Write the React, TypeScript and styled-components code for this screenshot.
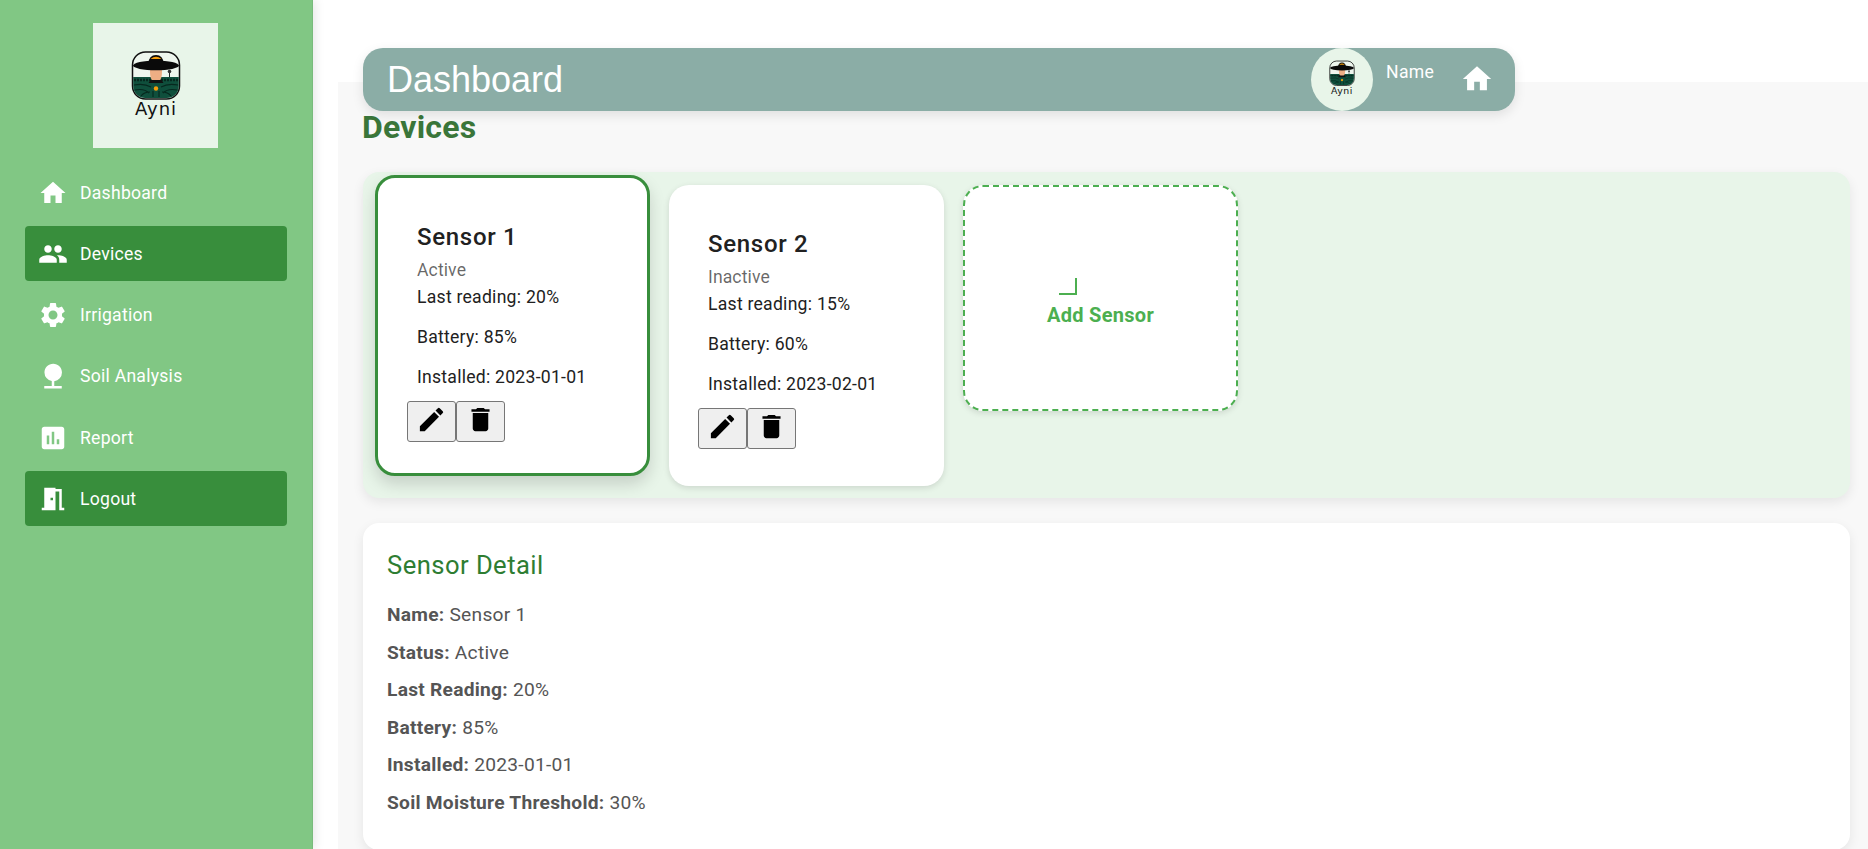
import React from "react";
import styled, { createGlobalStyle } from "styled-components";
import {
  MdAssessment,
  MdDelete,
  MdEdit,
  MdHome,
  MdMeetingRoom,
  MdNature,
  MdPeople,
  MdSettings,
} from "react-icons/md";

const GlobalStyle = createGlobalStyle`
  html, body {
    margin: 0;
    padding: 0;
    height: 100%;
    background: #fff;
    font-family: Roboto, "Liberation Sans", sans-serif;
  }
  * { box-sizing: border-box; }
`;

const Page = styled.div`
  display: flex;
  height: 849px;
  overflow: hidden;
`;

const Sidebar = styled.aside`
  width: 313px;
  flex-shrink: 0;
  background: #81c784;
  border-right: 1px solid #79bb7c;
  box-shadow: 2px 0 10px rgba(0, 0, 0, 0.1);
  padding: 23px 25px 0 25px;
  display: flex;
  flex-direction: column;
  position: relative;
  z-index: 2;
`;

const LogoBox = styled.div`
  width: 125px;
  height: 125px;
  margin: 0 0 17px 68px;
  padding-top: 4px;
  background: #e8f5e9;
  display: flex;
  align-items: center;
  justify-content: center;
`;

const NavList = styled.nav`
  display: flex;
  flex-direction: column;
  gap: 6.25px;
`;

const NavItem = styled.a<{ $active?: boolean }>`
  height: 55px;
  display: flex;
  align-items: center;
  gap: 12px;
  padding-left: 13px;
  border-radius: 4px;
  color: #fff;
  font-size: 17.6px;
  letter-spacing: 0.25px;
  background: ${({ $active }) => ($active ? "#388e3c" : "transparent")};

  svg {
    width: 30px;
    height: 30px;
    flex-shrink: 0;
  }
`;

const Main = styled.main`
  flex: 1;
  min-width: 0;
  display: flex;
  flex-direction: column;
`;

const TopBar = styled.header`
  width: 1152px;
  height: 63px;
  margin: 48px 0 -29px 50px;
  padding: 0 21px 0 24px;
  display: flex;
  align-items: center;
  border-radius: 20px;
  background: #8badA6;
  box-shadow: 0 4px 12px rgba(0, 0, 0, 0.1);
  color: #fff;
  position: relative;
  z-index: 1;
`;

const TopTitle = styled.h1`
  margin: 0;
  flex: 1;
  font-family: "Liberation Sans", Arial, sans-serif;
  font-size: 36px;
  font-weight: 400;
`;

const Avatar = styled.div`
  width: 62px;
  height: 63px;
  border-radius: 50%;
  background: #e8f5e9;
  display: flex;
  align-items: center;
  justify-content: center;
`;

const UserName = styled.span`
  font-size: 17.6px;
  letter-spacing: 0.25px;
  margin: 14px 26px 0 13px;
  align-self: flex-start;
`;

const HomeLink = styled.span`
  display: flex;
  margin-top: -2px;
  svg {
    width: 34px;
    height: 34px;
  }
`;

const Content = styled.div`
  flex: 1;
  margin-left: 25px;
  padding: 28px 18px 0 25px;
  background: #f8f8f8;
`;

const PageTitle = styled.h2`
  margin: 0 0 28px -1px;
  font-size: 32px;
  line-height: 34px;
  font-weight: 700;
  letter-spacing: 0.2px;
  color: #3a763a;
`;

const DevicePanel = styled.section`
  height: 326px;
  padding: 13px 13px;
  display: flex;
  align-items: flex-start;
  gap: 19px;
  border-radius: 16px;
  background: #e8f5e9;
  box-shadow: 0 4px 12px rgba(0, 0, 0, 0.08);
`;

const SensorCard = styled.article<{ $selected?: boolean }>`
  width: 275px;
  height: 301px;
  padding: 29px;
  border-radius: 20px;
  background: #fff;
  border: ${({ $selected }) => ($selected ? "3px solid #388e3c" : "none")};
  box-shadow: ${({ $selected }) =>
    $selected ? "0 8px 16px rgba(0, 0, 0, 0.15)" : "0 2px 6px rgba(0, 0, 0, 0.12)"};
  transform: ${({ $selected }) => ($selected ? "translateY(-10px)" : "none")};
  margin-left: ${({ $selected }) => ($selected ? "-1px" : "0")};
`;

const CardBody = styled.div`
  padding: 14px 10px 0;
`;

const CardName = styled.h3`
  margin: 0;
  font-size: 24px;
  line-height: 32px;
  font-weight: 500;
  letter-spacing: 0.7px;
  color: #212121;
`;

const CardStatus = styled.div`
  font-size: 17.6px;
  line-height: 24px;
  letter-spacing: 0.1px;
  color: rgba(0, 0, 0, 0.6);
  margin: 5px 0 3px;
`;

const CardLine = styled.p`
  margin: 0 0 16px;
  font-size: 17.6px;
  line-height: 24px;
  letter-spacing: 0.25px;
  color: #212121;
`;

const CardActions = styled.div`
  display: flex;
  margin-top: -4px;
`;

const IconButton = styled.button`
  width: 49px;
  height: 41px;
  padding: 0 0 5px;
  display: flex;
  align-items: center;
  justify-content: center;
  background: #efefef;
  border: 1px solid #767676;
  border-radius: 3px;
  color: #000;

  svg {
    width: 31px;
    height: 31px;
  }
`;

const AddCard = styled.div`
  width: 275px;
  height: 226px;
  padding-top: 9px;
  display: flex;
  flex-direction: column;
  align-items: center;
  justify-content: center;
  border: 2px dashed #4caf50;
  border-radius: 20px;
  background: #fff;
  box-shadow: 0 2px 6px rgba(0, 0, 0, 0.12);
  color: #4caf50;
  font-size: 20px;
  font-weight: 700;
  letter-spacing: 0.3px;
`;

const AddMark = styled.span`
  width: 18px;
  height: 17px;
  margin: 0 65px 8px 0;
  border-right: 2px solid #4caf50;
  border-bottom: 2px solid #4caf50;
`;

const DetailPanel = styled.section`
  margin-top: 25px;
  height: 327px;
  padding: 25px 25px 25px 24px;
  border-radius: 16px;
  background: #fff;
  box-shadow: 0 4px 12px rgba(0, 0, 0, 0.08);
`;

const DetailTitle = styled.h3`
  margin: 0 0 14px;
  font-size: 25.6px;
  line-height: 34px;
  font-weight: 400;
  letter-spacing: 0.45px;
  color: #2e7d32;
`;

const DetailRow = styled.p`
  margin: 0;
  font-size: 19.2px;
  line-height: 37.5px;
  letter-spacing: 0.25px;
  color: #555;
`;

const navItems = [
  { label: "Dashboard", icon: <MdHome /> },
  { label: "Devices", icon: <MdPeople />, active: true },
  { label: "Irrigation", icon: <MdSettings /> },
  { label: "Soil Analysis", icon: <MdNature /> },
  { label: "Report", icon: <MdAssessment /> },
  { label: "Logout", icon: <MdMeetingRoom />, active: true },
];

const sensors = [
  { name: "Sensor 1", status: "Active", reading: "20%", battery: "85%", installed: "2023-01-01", selected: true },
  { name: "Sensor 2", status: "Inactive", reading: "15%", battery: "60%", installed: "2023-02-01" },
];

const details = [
  ["Name:", "Sensor 1"],
  ["Status:", "Active"],
  ["Last Reading:", "20%"],
  ["Battery:", "85%"],
  ["Installed:", "2023-01-01"],
  ["Soil Moisture Threshold:", "30%"],
];

const AyniLogo = ({ size }: { size: number }) => (
  <svg width={size} height={size * 1.5} viewBox="0 0 50 75">
    <rect x="1.5" y="2" width="47" height="47" rx="13" fill="#eef6ee" stroke="#111" strokeWidth="1.5" />
    {/* field */}
    <path d="M2.2 27h45.6v9a12 12 0 0 1-12 12H14.2a12 12 0 0 1-12-12z" fill="#0f4f3c" />
    <path d="M3 30h44" stroke="#06281e" strokeWidth="2.4" strokeDasharray="2 1" />
    <path
      d="M3 35q10-2 17 2M47 35q-10-2-17 2M4 40q9-2 14 3M46 40q-9-2-14 3M10 46q3-4 9-4M40 46q-3-4-9-4M22 47v-6M28 47v-6"
      fill="none"
      stroke="#06281e"
      strokeWidth="1.1"
    />
    {/* tree */}
    <path d="M38.5 27v-4" stroke="#222" strokeWidth="1" />
    <circle cx="38.5" cy="21.5" r="1.8" fill="#333" />
    {/* farmer */}
    <path d="M19 16h12v6q0 7-3 9h-6q-3-2-3-9z" fill="#eeae84" />
    <path d="M19.5 30h11l2 3h-15z" fill="#111" />
    <ellipse cx="25" cy="15.5" rx="23" ry="4.8" fill="#0a0a0a" />
    <path d="M17 14q1-9 8-9t8 9z" fill="#0a0a0a" />
    <path d="M19.5 9q5.5-4.5 11 0z" fill="#f59e0b" />
    <circle cx="25" cy="38.5" r="2.2" fill="#f59e0b" />
    <text
      x="25"
      y="65"
      textAnchor="middle"
      fontFamily="'DejaVu Sans', sans-serif"
      fontSize="18"
      letterSpacing="1"
      fill="#111"
    >
      Ayni
    </text>
  </svg>
);

export default function App() {
  return (
    <Page>
      <GlobalStyle />
      <Sidebar>
        <LogoBox>
          <AyniLogo size={50} />
        </LogoBox>
        <NavList>
          {navItems.map((item) => (
            <NavItem key={item.label} $active={item.active}>
              {item.icon}
              {item.label}
            </NavItem>
          ))}
        </NavList>
      </Sidebar>
      <Main>
        <TopBar>
          <TopTitle>Dashboard</TopTitle>
          <Avatar>
            <AyniLogo size={26} />
          </Avatar>
          <UserName>Name</UserName>
          <HomeLink>
            <MdHome />
          </HomeLink>
        </TopBar>
        <Content>
          <PageTitle>Devices</PageTitle>
          <DevicePanel>
            {sensors.map((s) => (
              <SensorCard key={s.name} $selected={s.selected}>
                <CardBody>
                  <CardName>{s.name}</CardName>
                  <CardStatus>{s.status}</CardStatus>
                  <CardLine>Last reading: {s.reading}</CardLine>
                  <CardLine>Battery: {s.battery}</CardLine>
                  <CardLine>Installed: {s.installed}</CardLine>
                </CardBody>
                <CardActions>
                  <IconButton>
                    <MdEdit />
                  </IconButton>
                  <IconButton>
                    <MdDelete />
                  </IconButton>
                </CardActions>
              </SensorCard>
            ))}
            <AddCard>
              <AddMark />
              Add Sensor
            </AddCard>
          </DevicePanel>
          <DetailPanel>
            <DetailTitle>Sensor Detail</DetailTitle>
            {details.map(([label, value]) => (
              <DetailRow key={label}>
                <strong>{label}</strong> {value}
              </DetailRow>
            ))}
          </DetailPanel>
        </Content>
      </Main>
    </Page>
  );
}
